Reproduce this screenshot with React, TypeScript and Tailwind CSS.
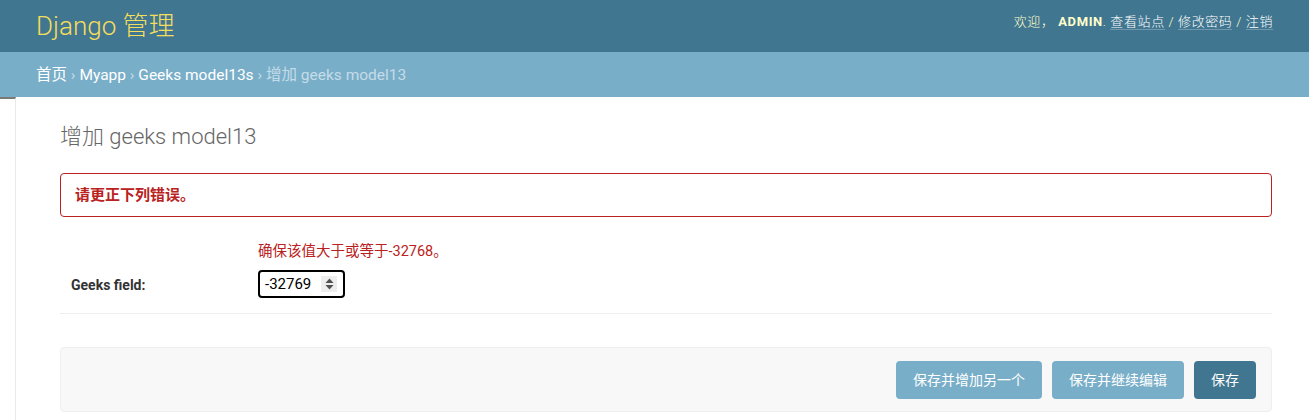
import { useState } from "react";

const font = "font-['Roboto','Noto_Sans_CJK_SC',sans-serif]";

function Header() {
  return (
    <div className="flex h-[52px] items-center justify-between bg-[#417690] px-9">
      <div className="text-[26px] leading-[32px] font-light text-[#f5dd5d]">Django 管理</div>
      <div className="self-start pt-[12px] text-[13px] leading-[20px] font-light tracking-[0.6px] text-[#ffc]">
        欢迎， <strong className="font-bold">ADMIN</strong>.{" "}
        <a className="border-b border-white/25 text-white">查看站点</a> /{" "}
        <a className="border-b border-white/25 text-white">修改密码</a> /{" "}
        <a className="border-b border-white/25 text-white">注销</a>
      </div>
    </div>
  );
}

function Breadcrumbs() {
  return (
    <div className="flex h-[45px] items-center bg-[#79aec8] px-9 pt-[3px] text-[15.5px] text-[#c4dce8]">
      <a className="text-white">首页</a>
      <span className="whitespace-pre"> › </span>
      <a className="text-white">Myapp</a>
      <span className="whitespace-pre"> › </span>
      <a className="text-white">Geeks model13s</a>
      <span className="whitespace-pre"> › 增加 geeks model13</span>
    </div>
  );
}

function NumberBox({ value }: { value: string }) {
  return (
    <div className="flex h-[28px] w-[87px] items-center justify-between rounded-[4px] border-2 border-black pr-[6px] pl-[5px]">
      <span className="text-[15px] leading-none text-black">{value}</span>
      <span className="grid size-[16px] place-items-center bg-[#ededed]">
        <svg width="9" height="12" viewBox="0 0 9 12">
          <path d="M4.5 0.5 L8.5 5 H0.5 Z" fill="#505050" />
          <path d="M4.5 11.5 L8.5 7 H0.5 Z" fill="#505050" />
        </svg>
      </span>
    </div>
  );
}

export default function App() {
  const [value] = useState("-32769");

  return (
    <div className={`min-h-screen bg-white ${font}`}>
      <Header />
      <Breadcrumbs />
      <div className="flex">
        <div className="h-[323px] w-[16px] shrink-0 border-t-2 border-r border-t-[#7a7a7a] border-r-[#eaeaea]" />
        <div className="min-w-0 flex-1 pt-[26px] pr-[37px] pl-[44px]">
          <h1 className="text-[22px] leading-[28px] font-light text-[#666]">增加 geeks model13</h1>
          <p className="mt-[22px] rounded-[4px] border border-[#ba2121] px-[14px] py-[10px] text-[15px] leading-[22px] font-bold text-[#ba2121]">
            请更正下列错误。
          </p>
          <div className="mt-[16px] border-b border-[#eee] pt-[10px] pb-[15px] pl-[11px]">
            <div className="pl-[187px] text-[14.5px] leading-[18px] text-[#ba2121]">确保该值大于或等于-32768。</div>
            <div className="mt-[9px] flex items-center">
              <label className="w-[187px] shrink-0 pt-[3px] text-[14px] font-bold text-[#333]">Geeks field:</label>
              <NumberBox value={value} />
            </div>
          </div>
          <div className="mt-[33px] flex justify-end gap-[10px] rounded-[4px] border border-[#eee] bg-[#f8f8f8] pt-[13px] pr-[15px] pb-[12px]">
            <button className="h-[38px] rounded-[4px] bg-[#79aec8] px-[17px] text-[14px] text-white">保存并增加另一个</button>
            <button className="h-[38px] rounded-[4px] bg-[#79aec8] px-[17px] text-[14px] text-white">保存并继续编辑</button>
            <button className="h-[38px] rounded-[4px] bg-[#417690] px-[17px] text-[14px] text-white">保存</button>
          </div>
        </div>
      </div>
    </div>
  );
}
